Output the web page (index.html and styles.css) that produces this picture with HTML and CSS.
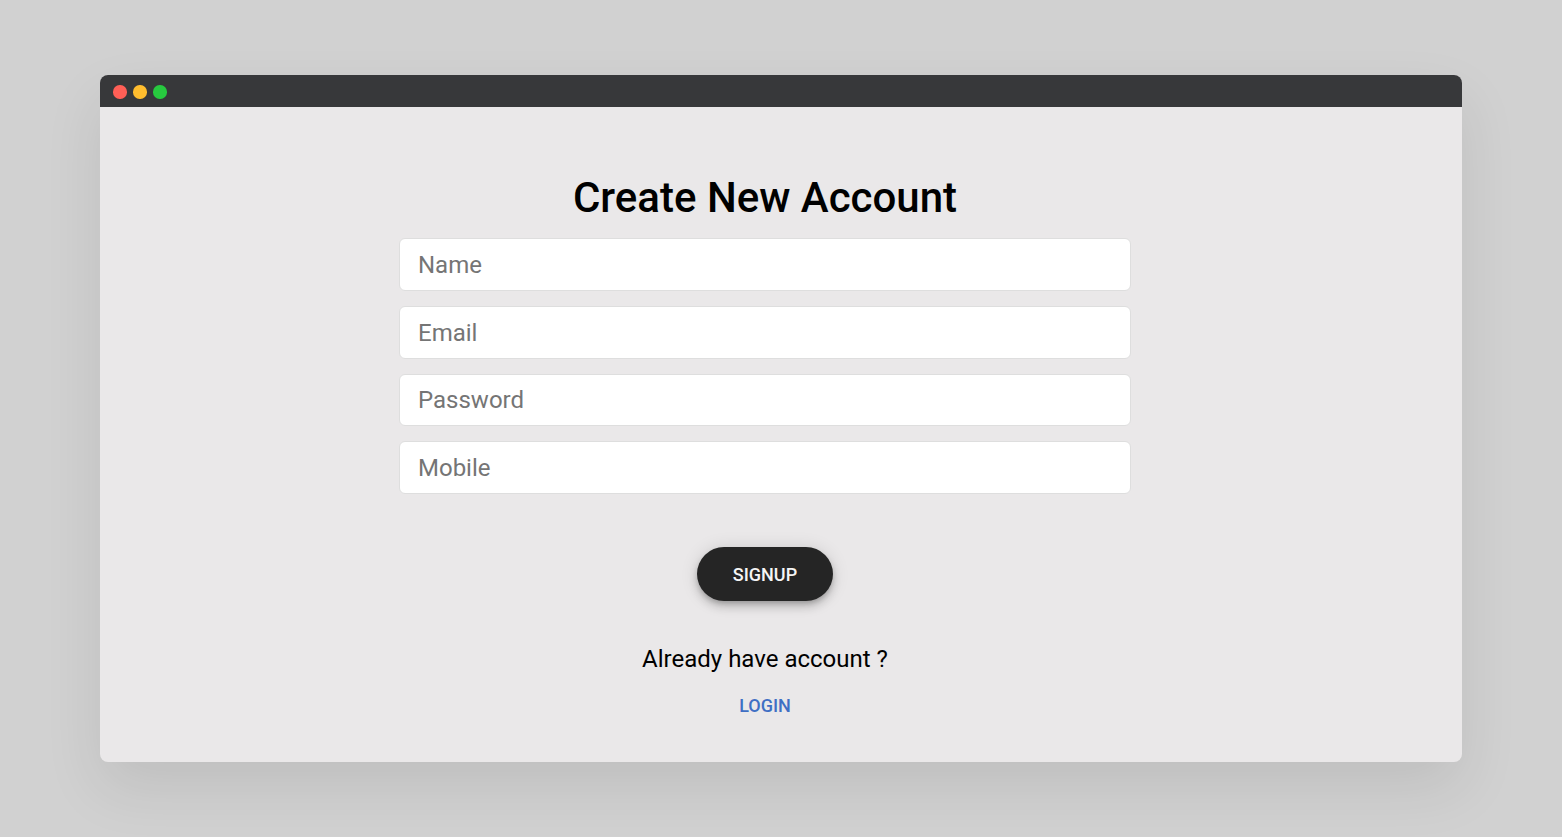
FILE: index.html
```html
<!DOCTYPE html>
<html lang="en">
<head>
    <meta charset="UTF-8">
    <meta name="viewport" content="width=device-width, initial-scale=1.0">
    <title>Create New Account</title>
    <link rel="stylesheet" href="styles.css">
</head>
<body>
    <div class="window">
        <div class="titlebar">
            <span class="dot dot-red"></span>
            <span class="dot dot-yellow"></span>
            <span class="dot dot-green"></span>
        </div>
        <div class="content">
            <h1>Create New Account</h1>
            <form class="signup-form">
                <input type="text" placeholder="Name">
                <input type="email" placeholder="Email">
                <input type="password" placeholder="Password">
                <input type="tel" placeholder="Mobile">
            </form>
            <button type="button" class="signup-btn">SIGNUP</button>
            <p class="login-text">Already have account ?</p>
            <a class="login-link">LOGIN</a>
        </div>
    </div>
</body>
</html>
```

FILE: styles.css
```css
html, body {
    height: 100%;
}
body {
    margin: 0;
    padding: 75px 100px;
    box-sizing: border-box;
    background-color: #d1d1d1;
    font-family: Roboto, sans-serif;
    overflow: hidden;
}
.window {
    height: 687px;
    border-radius: 8px;
    background-color: #eae8e9;
    box-shadow: 0 25px 60px rgba(0, 0, 0, 0.09);
}
.titlebar {
    display: flex;
    align-items: center;
    gap: 6.6px;
    height: 32px;
    padding: 2px 13.3px 0;
    box-sizing: border-box;
    background-color: #37383a;
    border-radius: 8px 8px 0 0;
}
.dot {
    width: 13.4px;
    height: 13.4px;
    border-radius: 50%;
}
.dot-red {
    background-color: #ff5f56;
}
.dot-yellow {
    background-color: #ffbd2e;
}
.dot-green {
    background-color: #27c93f;
}
.content {
    display: flex;
    flex-direction: column;
    align-items: center;
    padding: 64px 32px 0 0;
}
h1 {
    margin: 0 0 14.4px;
    font-size: 42px;
    font-weight: 500;
    line-height: 53px;
    color: #000;
}
.signup-form {
    display: flex;
    flex-direction: column;
    gap: 15px;
    width: 732px;
}
input {
    height: 52.6px;
    padding: 0.6px 18px 0;
    box-sizing: border-box;
    border: 1px solid #dedede;
    border-radius: 6px;
    background-color: #fff;
    font-family: Roboto, sans-serif;
    font-size: 24px;
    outline: none;
}
input::placeholder {
    color: #757575;
    opacity: 1;
}
.signup-btn {
    width: 136px;
    height: 54px;
    margin-top: 53px;
    padding: 2px 0 0;
    border: none;
    border-radius: 27px;
    background-color: #252525;
    color: #f5f5f5;
    font-family: Roboto, sans-serif;
    font-size: 18px;
    font-weight: 500;
    box-shadow: 0 3px 5px -1px rgba(0, 0, 0, 0.2), 0 6px 10px 0 rgba(0, 0, 0, 0.14), 0 1px 18px 0 rgba(0, 0, 0, 0.12);
    cursor: pointer;
}
.login-text {
    margin: 42px 0 0;
    font-size: 24px;
    line-height: 32px;
    color: #000;
}
.login-link {
    margin-top: 19px;
    font-size: 18px;
    font-weight: 500;
    line-height: 24px;
    color: #3f6fc4;
}
```
